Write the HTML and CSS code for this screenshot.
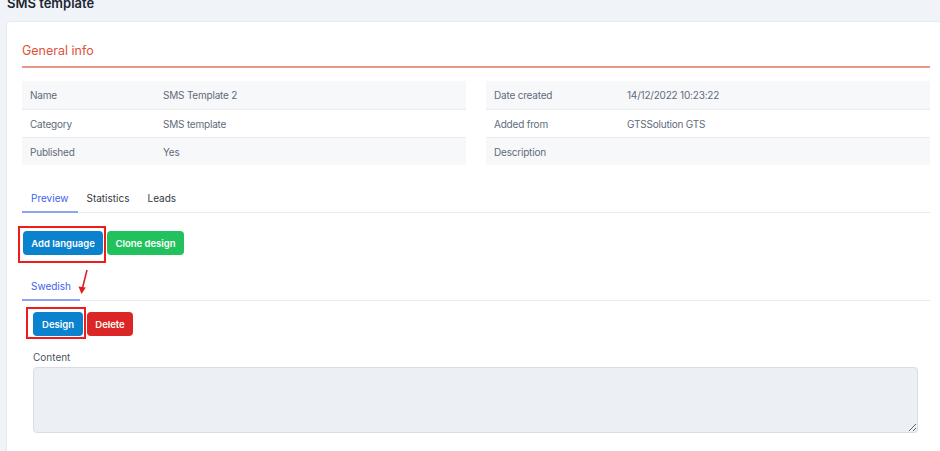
FILE: index.html
```html
<!DOCTYPE html>
<html lang="en">
<head>
    <meta charset="UTF-8">
    <meta name="viewport" content="width=device-width, initial-scale=1.0">
    <title>SMS template</title>
    <link rel="stylesheet" href="styles.css">
</head>
<body>
    <div class="page">
        <div class="page_header">
            <h1 class="page_title">SMS template</h1>
        </div>
        <div class="card">
            <h2 class="section_title">General info</h2>
            <div class="info_grid">
                <table class="info_table">
                    <tr><td class="label">Name</td><td>SMS Template 2</td></tr>
                    <tr><td class="label">Category</td><td>SMS template</td></tr>
                    <tr><td class="label">Published</td><td>Yes</td></tr>
                </table>
                <table class="info_table">
                    <tr><td class="label">Date created</td><td>14/12/2022 10:23:22</td></tr>
                    <tr><td class="label">Added from</td><td>GTSSolution GTS</td></tr>
                    <tr><td class="label">Description</td><td></td></tr>
                </table>
            </div>

            <div class="tabs">
                <a class="tab active">Preview</a>
                <a class="tab">Statistics</a>
                <a class="tab">Leads</a>
            </div>

            <div class="actions">
                <span class="marked marked_add"><button class="btn btn_blue btn_add">Add language</button></span>
                <button class="btn btn_green btn_clone">Clone design</button>
                <svg class="arrow" width="14" height="26" viewBox="0 0 14 26">
                    <line x1="10" y1="1" x2="5" y2="21" stroke="#e01b1b" stroke-width="1.6"/>
                    <path d="M1.5 17.5 L4.5 25 L8.8 18.4 Z" fill="#e01b1b"/>
                </svg>
            </div>

            <div class="tabs tabs_lang">
                <a class="tab active">Swedish</a>
            </div>

            <div class="lang_pane">
                <div class="actions actions_lang">
                    <span class="marked marked_design"><button class="btn btn_blue btn_design">Design</button></span>
                    <button class="btn btn_red btn_delete">Delete</button>
                </div>
                <label class="field_label">Content</label>
                <textarea class="content_box"></textarea>
            </div>
        </div>
    </div>
</body>
</html>
```

FILE: styles.css
```css
body {
    margin: 0;
    background-color: #f0f3f8;
    font-family: Inter, "Noto Sans", Arial, sans-serif;
    color: #5f6b7a;
    overflow: hidden;
}
.page {
    padding: 0 0 0 6px;
}
.page_header {
    height: 21px;
    overflow: hidden;
}
.page_title {
    margin: -7px 0 0 1px;
    font-size: 13px;
    line-height: 20px;
    font-weight: 600;
    color: #1d2530;
}
.card {
    background-color: #fff;
    border: 1px solid #e6eaf0;
    border-right: none;
    border-radius: 5px 0 0 0;
    padding: 19px 10px 30px 15px;
}
.section_title {
    margin: 0;
    font-size: 12.5px;
    font-weight: 400;
    line-height: 20px;
    color: #e0533d;
    padding-bottom: 5px;
    border-bottom: 2px solid #e7968a;
}
.info_grid {
    display: grid;
    grid-template-columns: 1fr 1fr;
    gap: 20px;
    margin-top: 13px;
}
.info_table {
    width: 100%;
    border-collapse: collapse;
    font-size: 10px;
    letter-spacing: -0.2px;
}
.info_table td {
    height: 27px;
    padding: 0 8px;
    border-top: 1px solid #e9edf2;
}
.info_table tr:first-child td {
    border-top: none;
    height: 28px;
}
.info_table tr:nth-child(odd) td {
    background-color: #f7f8fa;
}
.info_table .label {
    width: 117px;
}
.tabs {
    display: flex;
    margin-top: 19px;
    border-bottom: 1px solid #e6eaf0;
}
.tab {
    display: block;
    padding: 0 9px;
    height: 27px;
    line-height: 28px;
    font-size: 10px;
    color: #343a44;
    border-bottom: 2px solid transparent;
    margin-bottom: -1px;
}
.tab.active {
    color: #4361ee;
    border-bottom-color: #8fa4f0;
}
.actions {
    position: relative;
    display: flex;
    gap: 4px;
    margin-top: 18px;
    padding-left: 1px;
}
.btn {
    display: block;
    height: 24px;
    padding: 0;
    border: none;
    border-radius: 4px;
    font-family: inherit;
    font-size: 9.5px;
    font-weight: 600;
    color: #fff;
}
.btn_blue {
    background-color: #0a82cd;
}
.btn_green {
    background-color: #21c25e;
}
.btn_red {
    background-color: #dc2626;
}
.btn_add {
    width: 80px;
}
.btn_clone {
    width: 77px;
}
.btn_design {
    width: 50px;
}
.btn_delete {
    width: 46px;
}
.marked {
    position: relative;
    display: block;
}
.marked::after {
    content: "";
    position: absolute;
    border: 2px solid #ee1c1c;
}
.marked_add::after {
    left: -5px;
    top: -5px;
    width: 84px;
    height: 33px;
}
.marked_design::after {
    left: -7px;
    top: -5px;
    width: 56px;
    height: 28px;
}
.arrow {
    position: absolute;
    left: 55px;
    top: 38px;
}
.tabs_lang {
    margin-top: 17px;
}
.lang_pane {
    padding: 0 12px 0 11px;
}
.actions_lang {
    margin-top: 11px;
    padding-left: 0;
}
.field_label {
    display: block;
    margin-top: 14px;
    font-size: 10px;
    line-height: 14px;
    color: #4b5563;
}
.content_box {
    display: block;
    box-sizing: border-box;
    width: 100%;
    height: 66px;
    margin-top: 3px;
    background-color: #eceff4;
    border: 1px solid #d8dde5;
    border-radius: 4px;
}
```
